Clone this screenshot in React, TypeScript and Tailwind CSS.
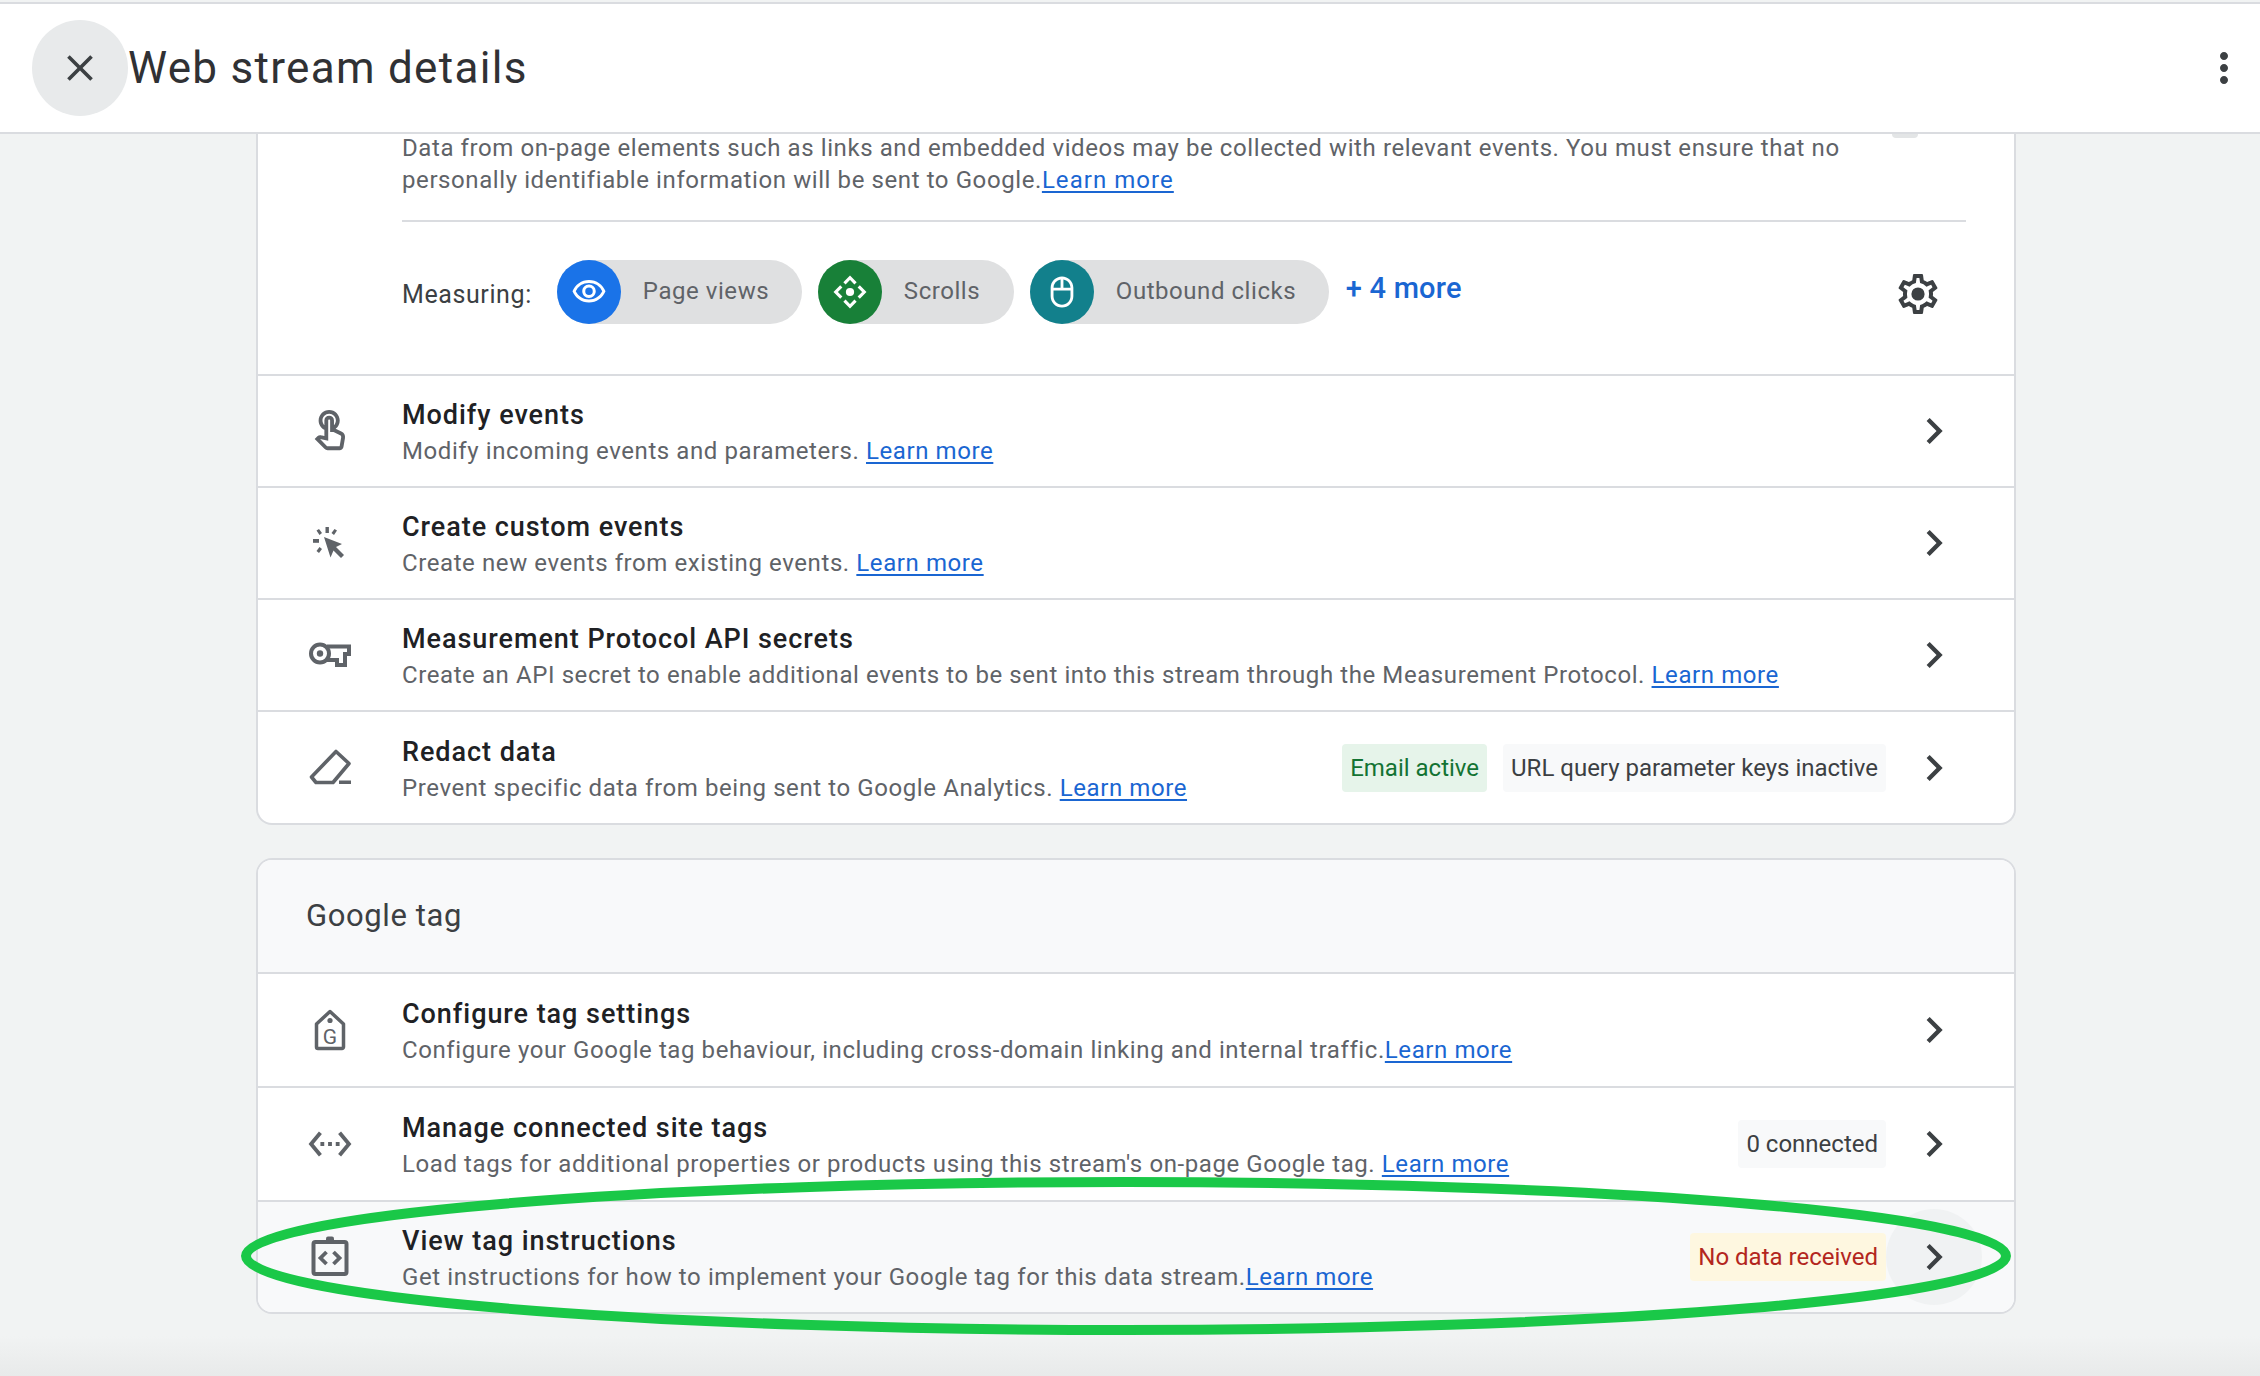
import React from "react";
import {
  MdClose,
  MdMoreVert,
  MdOutlineVisibility,
  MdOutlineMouse,
  MdOutlineTouchApp,
  MdChevronRight,
  MdOutlineSettingsEthernet,
} from "react-icons/md";

const GREY = "#5f6368";

function WebTraffic() {
  return (
    <svg className="mr-[4px]" width="36" height="36" viewBox="0 0 36 36" fill={GREY}>
      <rect x="15.5" y="2" width="3.4" height="6" />
      <rect x="3" y="14" width="6" height="3.8" />
      <path d="M6.5 5.5 9 4l3 4-2.500 2zM27 5.500 24.500 4l-3 4 2.500 2zM6.500 26 9 28l3-4-2.500-2z" />
      <path d="M14 12l18 7-6 3 8 8-3 3-7.500-7.500-3 7z" />
    </svg>
  );
}

function Eraser() {
  return (
    <svg width="44" height="40" viewBox="0 0 44 40" fill="none">
      <path d="M28 3.500 41 15.500 25 34.500H8L3.500 29Z" stroke={GREY} strokeWidth="3.6" strokeLinejoin="round" />
      <rect x="31" y="32.500" width="12" height="3.500" fill={GREY} />
    </svg>
  );
}

function Key() {
  return (
    <svg width="42" height="26" viewBox="0 0 42 26" fill="none">
      <circle cx="11" cy="11.500" r="9" stroke={GREY} strokeWidth="4" />
      <circle cx="11" cy="11.500" r="3.200" fill={GREY} />
      <path d="M18 4.500H40V12H36V23H28V18H18" stroke={GREY} strokeWidth="4" />
    </svg>
  );
}

function Scrolls() {
  return (
    <svg width="38" height="38" viewBox="0 0 24 24" fill="none" stroke="white" strokeWidth="2">
      <path d="M8.500 6.500 12 3l3.500 3.500M8.500 17.500 12 21l3.500-3.500M6.500 8.500 3 12l3.500 3.500M17.500 8.500 21 12l-3.500 3.500" />
      <circle cx="12" cy="12" r="2.600" fill="white" stroke="none" />
    </svg>
  );
}

function TagG() {
  return (
    <svg width="32" height="42" viewBox="0 0 32 42" fill="none">
      <path d="M16 2.500 29.500 15V38a1.500 1.500 0 0 1-1.500 1.500H4A1.500 1.500 0 0 1 2.500 38V15Z" stroke={GREY} strokeWidth="3.500" strokeLinejoin="round" />
      <circle cx="16" cy="11.500" r="2.600" fill={GREY} />
      <text x="16" y="35" textAnchor="middle" fontSize="21" fontFamily="Roboto, sans-serif" fill={GREY}>G</text>
    </svg>
  );
}

function ClipCode() {
  return (
    <svg className="mb-[3px]" width="38" height="42" viewBox="0 0 38 42" fill="none">
      <rect x="2.500" y="7" width="33" height="32" rx="2" stroke={GREY} strokeWidth="4" />
      <rect x="15" y="1.500" width="8" height="6" rx="2" fill={GREY} />
      <path d="M15.500 17 9.500 23l6 6M22.500 17l6 6-6 6" stroke={GREY} strokeWidth="3.800" />
    </svg>
  );
}

function Gear() {
  return (
    <svg width="48" height="48" viewBox="0 0 24 24" fill="#3c4043">
      <path d="M19.430 12.980c.04-.32.07-.64.07-.98 0-.34-.03-.66-.07-.98l2.110-1.650c.19-.15.24-.42.12-.64l-2-3.460c-.12-.22-.39-.3-.61-.22l-2.490 1c-.52-.4-1.080-.73-1.690-.98l-.38-2.650C14.460 2.180 14.250 2 14 2h-4c-.25 0-.46.18-.49.42l-.38 2.650c-.61.25-1.170.59-1.690.98l-2.490-1c-.23-.09-.49 0-.61.22l-2 3.460c-.13.22-.07.49.12.64l2.110 1.650c-.04.32-.07.65-.07.98 0 .33.03.66.07.98l-2.110 1.650c-.19.15-.24.42-.12.64l2 3.460c.12.22.39.3.61.22l2.490-1c.52.4 1.080.73 1.690.98l.38 2.650c.03.24.24.42.49.42h4c.25 0 .46-.18.49-.42l.38-2.650c.61-.25 1.170-.59 1.690-.98l2.490 1c.23.09.49 0 .61-.22l2-3.460c.12-.22.07-.49-.12-.64l-2.110-1.650zm-1.980-1.710c.04.31.05.52.05.73 0 .21-.02.43-.05.73l-.14 1.130.89.7 1.080.84-.7 1.210-1.270-.51-1.040-.42-.9.68c-.43.32-.84.56-1.250.73l-1.060.43-.16 1.130-.2 1.350h-1.400l-.19-1.350-.16-1.130-1.060-.43c-.43-.18-.83-.41-1.230-.71l-.91-.7-1.060.43-1.270.51-.7-1.210 1.080-.84.89-.7-.14-1.130c-.03-.31-.05-.54-.05-.74s.02-.43.05-.73l.14-1.130-.89-.7-1.080-.84.7-1.210 1.270.51 1.040.42.9-.68c.43-.32.84-.56 1.250-.73l1.060-.43.16-1.130.2-1.350h1.390l.19 1.350.16 1.130 1.060.43c.43.18.83.41 1.230.71l.91.7 1.060-.43 1.270-.51.7 1.210-1.070.85-.89.7.14 1.130z" />
      <circle cx="12" cy="12" r="3.300" />
    </svg>
  );
}

function Learn({ wide }: { wide?: boolean }) {
  return <a className={`text-[#1a66d2] underline decoration-[2px] underline-offset-[3px] ${wide ? "tracking-[1.05px]" : ""}`}>Learn more</a>;
}

function Pill({ icon, label, bg, w }: { icon: React.ReactNode; label: string; bg: string; w: string }) {
  return (
    <div className={`flex h-[64px] items-center rounded-full bg-[#dfe0e1] ${w}`}>
      <div className={`flex h-[64px] w-[64px] shrink-0 items-center justify-center rounded-full text-white ${bg}`}>{icon}</div>
      <span className="ml-[22px] mb-[2px] text-[24px] tracking-[0.55px] text-[#5f6368]">{label}</span>
    </div>
  );
}

function Row({
  icon,
  title,
  sub,
  extra,
  h,
  bg,
  hover,
}: {
  icon: React.ReactNode;
  title: string;
  sub: React.ReactNode;
  extra?: React.ReactNode;
  h: string;
  bg?: string;
  hover?: boolean;
}) {
  return (
    <div className={`flex items-center border-t-2 border-[#dadce0] pr-[32px] ${h} ${bg ?? ""}`}>
      <div className="flex w-[144px] shrink-0 justify-center pr-[1px] text-[#5f6368]">{icon}</div>
      <div className="min-w-0 flex-1 pt-[4px]">
        <div className="text-[27px] leading-[36px] font-medium tracking-[0.95px] text-[#202124]">{title}</div>
        <div className="text-[24px] leading-[36px] tracking-[0.59px] text-[#5f6368] whitespace-nowrap">{sub}</div>
      </div>
      <div className="flex items-center gap-[16px]">{extra}</div>
      <div className={`flex h-[96px] w-[96px] shrink-0 items-center justify-center rounded-full ${hover ? "bg-[#f0f2f3]" : ""}`}>
        <MdChevronRight size={52} color="#3c4043" />
      </div>
    </div>
  );
}

function Chip({ text, cls }: { text: string; cls: string }) {
  return <div className={`flex h-[48px] items-center rounded-[4px] px-[8px] text-[24px] tracking-[0px] whitespace-nowrap ${cls}`}>{text}</div>;
}

export default function App() {
  return (
    <div className="relative flex h-[1376px] w-full flex-col overflow-hidden bg-[#f1f3f3] font-['Roboto',sans-serif]">
      <header className="mt-[2px] flex h-[132px] shrink-0 items-center border-y-2 border-[#dadce0] bg-white pl-[32px] pr-[12px]">
        <div className="flex h-[96px] w-[96px] items-center justify-center rounded-full bg-[#e8eaeb] text-[#3c4043]">
          <MdClose size={44} />
        </div>
        <h1 className="text-[44px] font-normal tracking-[1.3px] text-[#303134]">Web stream details</h1>
        <div className="ml-auto text-[#3c4043]">
          <MdMoreVert size={48} />
        </div>
      </header>

      <main className="relative min-h-0 flex-1 pl-[256px] pr-[244px]">
        <section className="rounded-b-[16px] border-x-2 border-b-2 border-[#dadce0] bg-white">
          <div className="flow-root h-[240px] pl-[144px] pr-[48px]">
            <p className="-mt-[2px] h-[88px] text-[24px] leading-[32px] tracking-[0.59px] text-[#5f6368] whitespace-nowrap">
              Data from on-page elements such as links and embedded videos may be collected with relevant events. You must ensure that no
              <br />
              personally identifiable information will be sent to Google.
              <Learn wide />
            </p>
            <div className="flex h-[104px] items-end border-t-2 border-[#dadce0]">
              <div className="flex w-full items-center">
                <span className="mr-[25px] mt-[6px] text-[25px] tracking-[0.6px] text-[#3c4043]">Measuring:</span>
                <div className="flex items-center gap-[16px]">
                  <Pill bg="bg-[#1a73e8]" w="w-[245px]" label="Page views" icon={<MdOutlineVisibility size={36} />} />
                  <Pill bg="bg-[#188038]" w="w-[196px]" label="Scrolls" icon={<Scrolls />} />
                  <Pill bg="bg-[#12808c]" w="w-[299px]" label="Outbound clicks" icon={<MdOutlineMouse size={34} />} />
                </div>
                <span className="ml-[17px] mb-[6px] text-[29px] font-medium tracking-[0.2px] text-[#1a66d2]">+ 4 more</span>
                <div className="ml-auto mr-[24px] mt-[4px]">
                  <Gear />
                </div>
              </div>
            </div>
          </div>
          <Row h="h-[112px]" icon={<MdOutlineTouchApp size={46} />} title="Modify events" sub={<>Modify incoming events and parameters. <Learn /></>} />
          <Row h="h-[112px]" icon={<WebTraffic />} title="Create custom events" sub={<>Create new events from existing events. <Learn /></>} />
          <Row h="h-[112px]" icon={<Key />} title="Measurement Protocol API secrets" sub={<>Create an API secret to enable additional events to be sent into this stream through the Measurement Protocol. <Learn /></>} />
          <Row
            h="h-[113px]"
            icon={<Eraser />}
            title="Redact data"
            sub={<>Prevent specific data from being sent to Google Analytics. <Learn /></>}
            extra={
              <>
                <Chip text="Email active" cls="bg-[#e6f4ea] text-[#137333]" />
                <Chip text="URL query parameter keys inactive" cls="bg-[#f8f9fa] text-[#3c4043]" />
              </>
            }
          />
        </section>

        <section className="mt-[33px] overflow-hidden rounded-[16px] border-2 border-[#dadce0] bg-white">
          <div className="flex h-[112px] items-center bg-[#f8f9fa] pl-[48px] text-[31px] tracking-[0.6px] text-[#3c4043]">Google tag</div>
          <Row h="h-[114px]" icon={<TagG />} title="Configure tag settings" sub={<>Configure your Google tag behaviour, including cross-domain linking and internal traffic.<Learn /></>} />
          <Row
            h="h-[114px]"
            icon={<MdOutlineSettingsEthernet size={46} />}
            title="Manage connected site tags"
            sub={<>Load tags for additional properties or products using this stream's on-page Google tag. <Learn /></>}
            extra={<Chip text="0 connected" cls="bg-[#f8f9fa] text-[#3c4043]" />}
          />
          <Row
            h="h-[112px]"
            bg="bg-[#f8f9fa]"
            hover
            icon={<ClipCode />}
            title="View tag instructions"
            sub={<>Get instructions for how to implement your Google tag for this data stream.<Learn /></>}
            extra={<Chip text="No data received" cls="bg-[#fef7e0] text-[#b3261e]" />}
          />
        </section>

        <div className="absolute left-[1892px] top-0 h-[4px] w-[26px] rounded-b-full bg-[#e3e5e6]" />
      </main>

      <div className="absolute inset-x-0 bottom-0 h-[40px] bg-gradient-to-b from-[#f1f3f3] to-[#e8eaea]" />

      <svg className="pointer-events-none absolute left-0 top-0" width="2260" height="1376" viewBox="0 0 2260 1376" fill="none">
        <ellipse cx="1126" cy="1256" rx="880" ry="74" stroke="#1ac848" strokeWidth="10" />
      </svg>
    </div>
  );
}
